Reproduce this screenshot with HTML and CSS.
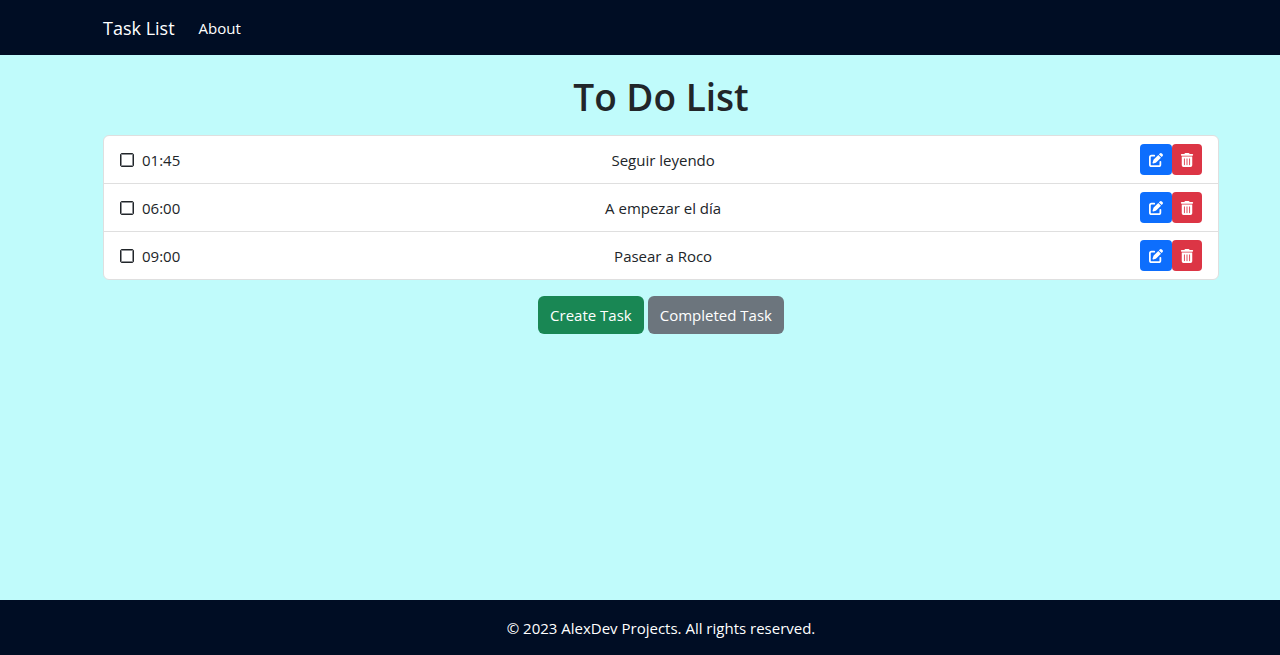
FILE: index.html
```html
<!DOCTYPE html>
<html lang="en">
<head>
<meta charset="utf-8">
<meta name="viewport" content="width=device-width, initial-scale=1">
<title>Task List</title>
<link rel="stylesheet" href="styles.css">
</head>
<body>
<svg class="sprite" aria-hidden="true">
  <symbol id="icon-edit" viewBox="0 0 512 512"><path d="M472 22a56 56 0 0 0-79 0l-30 30 98 98 30-30a56 56 0 0 0 0-79zM172 242c-6 6-11 14-13 22l-30 89a24 24 0 0 0 30 30l89-30c8-3 16-7 22-13l168-168-98-98zM96 64a96 96 0 0 0-96 96v256a96 96 0 0 0 96 96h256a96 96 0 0 0 96-96v-96a32 32 0 0 0-64 0v96a32 32 0 0 1-32 32H96a32 32 0 0 1-32-32V160a32 32 0 0 1 32-32h96a32 32 0 0 0 0-64z"/></symbol>
  <symbol id="icon-trash" viewBox="0 0 448 512"><path fill-rule="evenodd" d="M135 18A32 32 0 0 1 164 0h120a32 32 0 0 1 29 18l7 14h96a32 32 0 0 1 0 64H32a32 32 0 0 1 0-64h96zM32 128h384v320a64 64 0 0 1-64 64H96a64 64 0 0 1-64-64zm96 64a16 16 0 0 0-16 16v224a16 16 0 0 0 32 0V208a16 16 0 0 0-16-16zm96 0a16 16 0 0 0-16 16v224a16 16 0 0 0 32 0V208a16 16 0 0 0-16-16zm96 0a16 16 0 0 0-16 16v224a16 16 0 0 0 32 0V208a16 16 0 0 0-16-16z"/></symbol>
</svg>
<header class="bar">
  <nav class="container nav">
    <a class="brand" href="#">Task List</a>
    <a class="nav-link" href="#">About</a>
  </nav>
</header>
<main class="page">
  <div class="container">
    <h1 class="title">To Do List</h1>
    <ul class="tasks">
      <li class="task">
        <label class="when"><input class="check" type="checkbox"><span>01:45</span></label>
        <span>Seguir leyendo</span>
        <span class="actions">
          <button class="icon-btn edit" type="button" aria-label="Edit"><svg class="icon edit-icon"><use href="#icon-edit"/></svg></button>
          <button class="icon-btn delete" type="button" aria-label="Delete"><svg class="icon trash-icon"><use href="#icon-trash"/></svg></button>
        </span>
      </li>
      <li class="task">
        <label class="when"><input class="check" type="checkbox"><span>06:00</span></label>
        <span>A empezar el día</span>
        <span class="actions">
          <button class="icon-btn edit" type="button" aria-label="Edit"><svg class="icon edit-icon"><use href="#icon-edit"/></svg></button>
          <button class="icon-btn delete" type="button" aria-label="Delete"><svg class="icon trash-icon"><use href="#icon-trash"/></svg></button>
        </span>
      </li>
      <li class="task">
        <label class="when"><input class="check" type="checkbox"><span>09:00</span></label>
        <span>Pasear a Roco</span>
        <span class="actions">
          <button class="icon-btn edit" type="button" aria-label="Edit"><svg class="icon edit-icon"><use href="#icon-edit"/></svg></button>
          <button class="icon-btn delete" type="button" aria-label="Delete"><svg class="icon trash-icon"><use href="#icon-trash"/></svg></button>
        </span>
      </li>
    </ul>
    <div class="buttons">
      <a class="btn create" href="#">Create Task</a>
      <a class="btn completed" href="#">Completed Task</a>
    </div>
  </div>
</main>
<footer class="bar">
  <p class="container legal">© 2023 AlexDev Projects. All rights reserved.</p>
</footer>
</body>
</html>
```

FILE: styles.css
```css
*, *::before, *::after { box-sizing: border-box; }
body {
  margin: 0;
  min-height: 100vh;
  display: flex;
  flex-direction: column;
  background: #c0fbfb;
  color: #212529;
  font: 400 15px/24px "Segoe UI", "Open Sans", "Noto Sans", sans-serif;
}
a { text-decoration: none; }
.sprite { display: none; }
.bar, .page { padding-left: 42px; }
.bar { background: #000d24; color: #fff; }
.page { flex: 1; }
.container {
  max-width: 1140px;
  margin: 0 auto;
  padding: 0 12px;
}
.nav { display: flex; align-items: center; gap: 24px; min-height: 55px; }
.brand { color: #fff; font-size: 18px; }
.nav-link { color: #fff; }
.title {
  margin: 0;
  padding: 18px 0 14px;
  font-size: 37px;
  line-height: 48px;
  font-weight: 600;
  text-align: center;
}
.tasks {
  list-style: none;
  margin: 0 0 16px;
  padding: 0;
  background: #fff;
  border: 1px solid #dfdfdf;
  border-radius: 6px;
}
.task {
  display: flex;
  align-items: center;
  justify-content: space-between;
  padding: 8px 16px;
}
.task + .task { border-top: 1px solid #dfdfdf; }
.when { display: flex; align-items: center; gap: 8px; padding-right: 6px; }
.check {
  appearance: none;
  width: 14px;
  height: 14px;
  margin: 0;
  border: 1px solid #212529;
  border-radius: 2px;
  box-shadow: inset 0 0 0 1px #8d9094;
}
.check:checked { background: #212529; }
.actions { display: flex; }
.icon-btn {
  display: flex;
  align-items: center;
  justify-content: center;
  height: 31px;
  padding: 0 8px;
  border: 0;
  border-radius: 4px;
  color: #fff;
}
.edit { background: #0d6efd; }
.delete { background: #dc3545; }
.icon { display: block; height: 14px; fill: currentColor; }
.edit-icon { width: 16px; }
.trash-icon { width: 14px; }
.buttons { display: flex; justify-content: center; gap: 4px; }
.btn { padding: 7px 12px; border-radius: 6px; color: #fff; }
.create { background: #198754; }
.completed { background: #6c757d; }
.legal { padding-top: 16px; padding-bottom: 15px; text-align: center; }
```
